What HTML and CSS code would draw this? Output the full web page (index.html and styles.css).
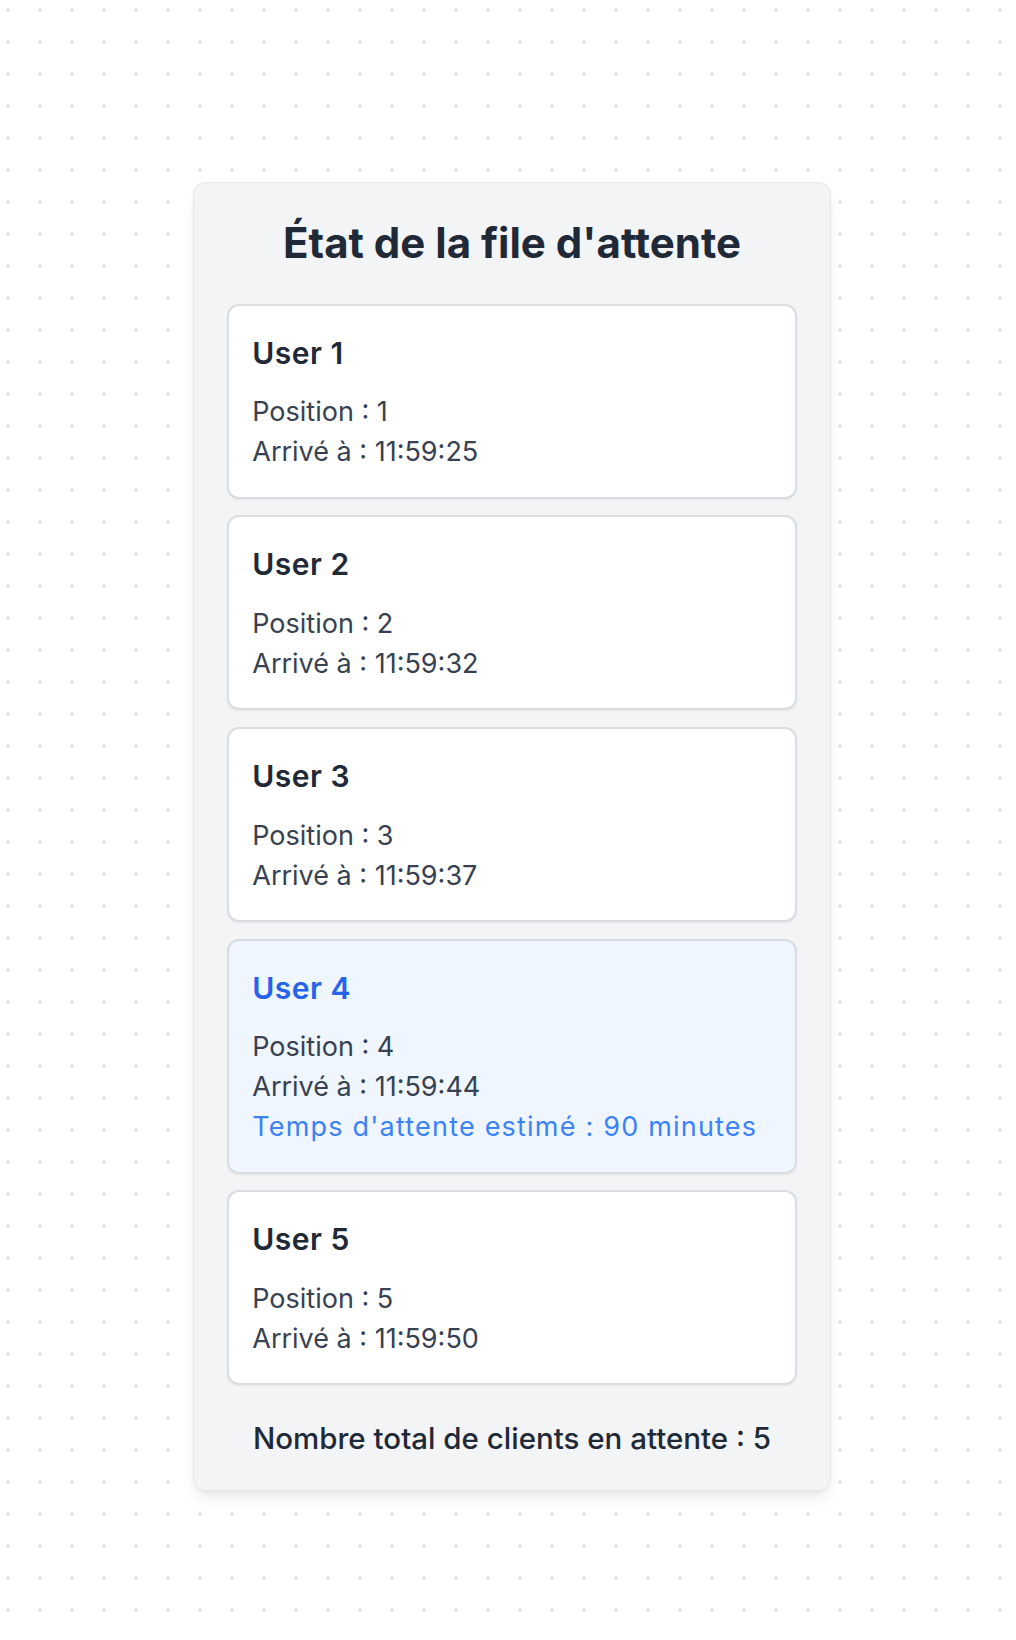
FILE: index.html
```html
<!DOCTYPE html>
<html lang="fr">
<head>
<meta charset="utf-8">
<title>État de la file d'attente</title>
<link rel="stylesheet" href="styles.css">
</head>
<body>
<main class="page">
  <section class="queue">
    <h1 class="queue-title">État de la file d'attente</h1>
    <ul class="queue-list">
      <li class="queue-item">
        <h2 class="item-name">User 1</h2>
        <p class="item-line">Position : 1</p>
        <p class="item-line">Arrivé à : 11:59:25</p>
      </li>
      <li class="queue-item">
        <h2 class="item-name">User 2</h2>
        <p class="item-line">Position : 2</p>
        <p class="item-line">Arrivé à : 11:59:32</p>
      </li>
      <li class="queue-item">
        <h2 class="item-name">User 3</h2>
        <p class="item-line">Position : 3</p>
        <p class="item-line">Arrivé à : 11:59:37</p>
      </li>
      <li class="queue-item is-current">
        <h2 class="item-name">User 4</h2>
        <p class="item-line">Position : 4</p>
        <p class="item-line">Arrivé à : 11:59:44</p>
        <p class="item-line item-estimate">Temps d'attente estimé : 90 minutes</p>
      </li>
      <li class="queue-item">
        <h2 class="item-name">User 5</h2>
        <p class="item-line">Position : 5</p>
        <p class="item-line">Arrivé à : 11:59:50</p>
      </li>
    </ul>
    <p class="queue-total">Nombre total de clients en attente : 5</p>
  </section>
</main>
</body>
</html>
```

FILE: styles.css
```css
html, body {
  margin: 0;
  padding: 0;
}

body {
  font-family: Inter, "Noto Sans", "Liberation Sans", sans-serif;
  color: #374151;
  background-color: #ffffff;
  background-image: radial-gradient(circle, #d8d9e0 1.3px, rgba(255,255,255,0) 1.9px);
  background-size: 32px 32px;
  background-position: -8px -6px;
  min-height: 1640px;
}

.page {
  display: flex;
  justify-content: center;
  padding: 182px 0 0 8px;
}

.queue {
  box-sizing: border-box;
  width: 638.5px;
  background: #f3f4f6;
  border: 1px solid #e5e7eb;
  border-radius: 12px;
  padding: 35.8px 33.5px 32.5px;
  box-shadow: 0 10px 15px -3px rgba(0,0,0,0.08), 0 4px 6px -4px rgba(0,0,0,0.08);
}

.queue-title {
  margin: 0 0 36.8px;
  font-size: 42px;
  line-height: 48px;
  font-weight: 700;
  color: #1f2937;
  text-align: center;
}

.queue-list {
  list-style: none;
  margin: 0;
  padding: 0;
  display: flex;
  flex-direction: column;
  gap: 16.6px;
}

.queue-item {
  background: #ffffff;
  border: 2px solid #d9dce1;
  border-radius: 12px;
  padding: 24px 24px 24.5px 23px;
  box-shadow: 0 1px 2px rgba(0,0,0,0.05);
}

.queue-item.is-current {
  background: #eff6ff;
}

.item-name {
  margin: 0 0 15px;
  font-size: 30px;
  line-height: 47.6px;
  font-weight: 600;
  letter-spacing: 0.5px;
  color: #1f2937;
}

.is-current .item-name {
  color: #2563eb;
}

.item-line {
  margin: 0;
  font-size: 27px;
  line-height: 40px;
  font-weight: 400;
  color: #374151;
}

.item-estimate {
  color: #3b82f6;
  letter-spacing: 1.2px;
}

.queue-total {
  margin: 32.5px 0 0;
  font-size: 29.5px;
  line-height: 40px;
  font-weight: 500;
  color: #1f2937;
  text-align: center;
}
```
